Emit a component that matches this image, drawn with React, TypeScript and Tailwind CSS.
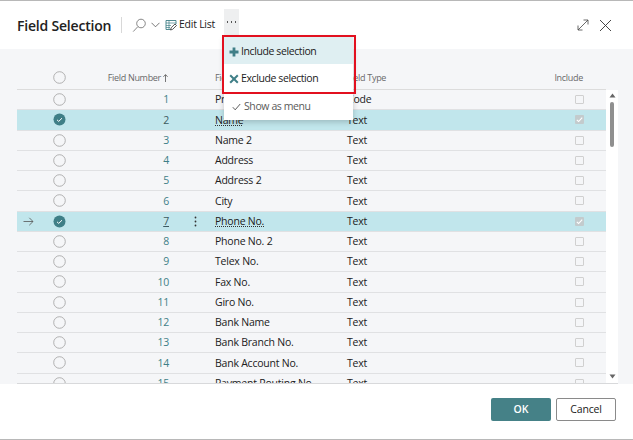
import React from "react";

const rows: [number, string, string][] = [
  [1, "Primary Key", "Code"],
  [2, "Name", "Text"],
  [3, "Name 2", "Text"],
  [4, "Address", "Text"],
  [5, "Address 2", "Text"],
  [6, "City", "Text"],
  [7, "Phone No.", "Text"],
  [8, "Phone No. 2", "Text"],
  [9, "Telex No.", "Text"],
  [10, "Fax No.", "Text"],
  [11, "Giro No.", "Text"],
  [12, "Bank Name", "Text"],
  [13, "Bank Branch No.", "Text"],
  [14, "Bank Account No.", "Text"],
  [15, "Payment Routing No.", "Text"],
];

function Radio({ on }: { on?: boolean }) {
  return on ? (
    <svg width="13" height="13" viewBox="0 0 13 13">
      <circle cx="6.5" cy="6.5" r="6" fill="#3f7f87" />
      <path d="M4 6.8l1.7 1.6L9 5.2" fill="none" stroke="#fff" strokeWidth="1" />
    </svg>
  ) : (
    <svg width="13" height="13" viewBox="0 0 13 13">
      <circle cx="6.5" cy="6.5" r="5.8" fill="none" stroke="#a9a9a9" strokeWidth="0.9" />
    </svg>
  );
}

function Check({ on }: { on?: boolean }) {
  return on ? (
    <div className="w-[9px] h-[9px] rounded-[1px] bg-[#c3cbcd] flex items-center justify-center">
      <svg width="9" height="9" viewBox="0 0 9 9">
        <path d="M1.8 4.8l1.8 1.7L7.2 2.6" fill="none" stroke="#fff" strokeWidth="1.1" />
      </svg>
    </div>
  ) : (
    <div className="w-[9px] h-[9px] rounded-[1px] border border-[#d0d0d0]" />
  );
}

export default function App() {
  return (
    <div
      className="relative w-[633px] h-[440px] overflow-hidden bg-white flex flex-col text-[#212121] text-[11px] border-t border-b border-[#b8b8b8]"
      style={{ fontFamily: '"Open Sans", "Liberation Sans", sans-serif' }}
    >
      <div className="h-[48px] shrink-0 flex items-center pl-[17px] pr-[21px]">
        <span className="text-[14px] font-semibold tracking-[-0.2px] w-[103px] text-[#212121]">Field Selection</span>
        <div className="w-px h-[16px] bg-[#d8d8d8] ml-[1px] mr-[10px]" />
        <svg width="15" height="15" viewBox="0 0 15 15" fill="none" stroke="#555" strokeWidth="0.7">
          <circle cx="9" cy="5.5" r="4.3" />
          <path d="M5.8 8.7L1.2 13.6" />
        </svg>
        <svg className="ml-[4px]" width="9" height="6" viewBox="0 0 9 6" fill="none" stroke="#555" strokeWidth="0.8">
          <path d="M0.5 0.8L4.5 4.8L8.5 0.8" />
        </svg>
        <svg className="ml-[5px]" width="12" height="12" viewBox="0 0 12 12" fill="none" strokeWidth="0.9">
          <path d="M1 1.5H11V5M1 1.5V10.5H5.5" stroke="#3f7f87" />
          <path d="M1 4H11M1 6.5H6M1 8.5H5M4 1.5V10" stroke="#3f7f87" strokeWidth="0.7" />
          <path d="M5.5 11L6.2 8.7L10 5L11.5 6.5L7.7 10.3Z" stroke="#444" />
        </svg>
        <span className="ml-[2px] w-[36px] whitespace-nowrap text-[10.5px] tracking-[-0.25px]">Edit List</span>
        <div className="ml-[9px] -mt-[5px] w-[15px] h-[26px] bg-[#eeeff0] flex items-center justify-center gap-[2.5px] relative top-[-0.5px]">
          <i className="w-[1.5px] h-[1.5px] bg-[#555] block" />
          <i className="w-[1.5px] h-[1.5px] bg-[#555] block" />
          <i className="w-[1.5px] h-[1.5px] bg-[#555] block" />
        </div>
        <div className="flex-1" />
        <svg width="12" height="12" viewBox="0 0 12 12" fill="none" stroke="#444" strokeWidth="0.8">
          <path d="M1 11L11 1M6.5 1H11V5.5M1 6.5V11H5.5" />
        </svg>
        <svg className="ml-[10px]" width="13" height="13" viewBox="0 0 13 13" fill="none" stroke="#333" strokeWidth="0.9">
          <path d="M1 1L12 12M12 1L1 12" />
        </svg>
      </div>

      <div className="h-[335px] shrink-0 bg-[#f5f6f8] pl-[17px] pt-[16px] pr-[15px]">
        <div className="h-[319px] flex overflow-hidden border-b border-[#d8d9db]">
          <div className="flex-1 min-w-0">
            <div className="h-[25px] flex items-center border-b border-[#dcdcdc] text-[#6a6a6a] text-[9px] tracking-[-0.3px]">
              <div className="w-[36px]" />
              <div className="w-[13px] flex"><Radio /></div>
              <div className="w-[102px] flex items-center justify-end gap-[2px] whitespace-nowrap pt-[1px]">
                <span>Field Number</span>
                <svg width="5" height="8" viewBox="0 0 5 8" fill="none" stroke="#555" strokeWidth="0.8">
                  <path d="M2.5 8V0.8M0.4 2.8L2.5 0.6L4.6 2.8" />
                </svg>
              </div>
              <div className="w-[47px]" />
              <div className="w-[132px] pt-[1px]">Field Name</div>
              <div className="flex-1 pt-[1px]">Field Type</div>
              <div className="w-[40px] text-right mr-[23px] pt-[1px]">Include</div>
            </div>
            {rows.map(([n, name, type]) => {
              const sel = n === 2 || n === 7;
              const cur = n === 7;
              return (
                <div
                  key={n}
                  className={`h-[20.25px] flex items-center border-b border-[#e0e1e3] text-[10.5px] tracking-[-0.22px] ${sel ? "bg-[#c1e6ec]" : ""}`}
                >
                  <div className="w-[36px] pl-[6px] flex">
                    {cur && (
                      <svg width="11" height="9" viewBox="0 0 11 9" fill="none" stroke="#555" strokeWidth="0.8">
                        <path d="M0.5 4.5H10M6.3 0.8L10 4.5L6.3 8.2" />
                      </svg>
                    )}
                  </div>
                  <div className="w-[13px] flex"><Radio on={sel} /></div>
                  <div
                    className={`w-[103px] text-right pt-[1px] ${sel ? "text-[#3c5a60]" : "text-[#3f7f87]"} ${cur ? "underline" : ""}`}
                  >
                    {n}
                  </div>
                  <div className="w-[46px] pl-[25px] flex">
                    {cur && (
                      <svg width="3" height="11" viewBox="0 0 3 11" fill="#333">
                        <circle cx="1.5" cy="1.5" r="0.9" />
                        <circle cx="1.5" cy="5.5" r="0.9" />
                        <circle cx="1.5" cy="9.5" r="0.9" />
                      </svg>
                    )}
                  </div>
                  <div className="w-[132px] whitespace-nowrap pt-[1px]">
                    <span className={sel ? "underline decoration-dotted decoration-[#333]" : ""}>{name}</span>
                  </div>
                  <div className="flex-1 pt-[1px]">{type}</div>
                  <div className="w-[9px] mr-[22px] flex"><Check on={sel} /></div>
                </div>
              );
            })}
          </div>
          <div className="w-[12px] shrink-0 mt-[25px] bg-white flex flex-col items-center">
            <svg className="mt-[3px]" width="7" height="5" viewBox="0 0 7 5"><path d="M0.5 4.5L3.5 0.5L6.5 4.5Z" fill="#666" /></svg>
            <div className="w-[4px] h-[45px] mt-[4px] rounded-full bg-[#8f8f8f]" />
            <div className="flex-1" />
            <svg className="mb-[4px]" width="7" height="5" viewBox="0 0 7 5"><path d="M0.5 0.5L3.5 4.5L6.5 0.5Z" fill="#666" /></svg>
          </div>
        </div>
      </div>

      <div className="flex-1 flex items-start justify-end pt-[14px] pr-[17px] gap-[5px]">
        <div className="w-[60px] h-[23px] rounded-[2px] bg-[#458187] text-white font-semibold text-[10.5px] flex items-center justify-center">OK</div>
        <div className="w-[60px] h-[23px] rounded-[2px] bg-white border border-[#8a8a8a] text-[10.5px] tracking-[-0.2px] flex items-center justify-center">Cancel</div>
      </div>

      <div className="absolute left-[224px] top-[36px] w-[129px] h-[83px] bg-white shadow-[0_2px_6px_rgba(0,0,0,0.2)] text-[10.5px] tracking-[-0.4px]">
        <div className="h-[27px] pt-[2px] bg-[#dfeff2] flex items-center pl-[5px] gap-[2px]">
          <svg width="10" height="10" viewBox="0 0 10 10"><path d="M3.6 0.5H6.4V3.6H9.5V6.4H6.4V9.5H3.6V6.4H0.5V3.6H3.6Z" fill="#3f7f87" /></svg>
          <span>Include selection</span>
        </div>
        <div className="h-[28px] pt-[2px] flex items-center pl-[5px] gap-[2px]">
          <svg width="10" height="10" viewBox="0 0 10 10" fill="none" stroke="#3f7f87" strokeWidth="2"><path d="M1.2 1.2L8.8 8.8M8.8 1.2L1.2 8.8" /></svg>
          <span>Exclude selection</span>
        </div>
        <div className="h-[28px] pt-[2px] flex items-center pl-[8px] gap-[3px] text-[#5a5a5a]">
          <svg width="9" height="8" viewBox="0 0 9 8" fill="none" stroke="#333" strokeWidth="0.8"><path d="M0.8 4.2L3.2 6.8L8.2 1" /></svg>
          <span>Show as menu</span>
        </div>
      </div>
      <div className="absolute left-[222px] top-[34px] w-[134px] h-[59px] border-2 border-[#e2101f] pointer-events-none" />
    </div>
  );
}
